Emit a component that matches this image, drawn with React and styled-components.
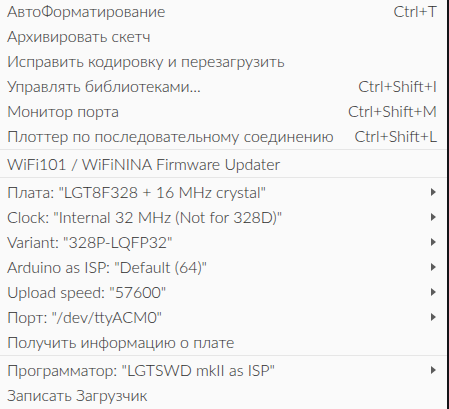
import styled, { createGlobalStyle } from "styled-components";

const GlobalStyle = createGlobalStyle`
  html, body {
    margin: 0;
    padding: 0;
    background: #141418;
  }
  body {
    font-family: Lato, "Noto Sans", sans-serif;
  }
`;

const Screen = styled.div`
  width: 449px;
  height: 409px;
  overflow: hidden;
  display: flex;
`;

const Menu = styled.div`
  width: 447px;
  height: 411px;
  margin-top: -2px;
  background: #fafafa;
  display: flex;
  flex-direction: column;
`;

const Item = styled.div`
  height: 25px;
  flex-shrink: 0;
  display: flex;
  align-items: center;
  justify-content: space-between;
  padding: 0 10px 0 7px;
  font-size: 15.9px;
  font-weight: 300;
  color: #2e2e2e;
  white-space: nowrap;
`;

const Label = styled.span`
  padding-bottom: 1px;
`;

const Shortcut = styled.span`
  padding-bottom: 1px;
`;

const SubArrow = styled.span`
  width: 0;
  height: 0;
  margin-right: 1px;
  border-top: 4px solid transparent;
  border-bottom: 4px solid transparent;
  border-left: 5px solid #5c5c5c;
`;

const Separator = styled.div`
  height: 1px;
  margin: 1px 0;
  flex-shrink: 0;
  background: #e6e6e6;
`;

const groups = [
  [
    { label: "АвтоФорматирование", shortcut: "Ctrl+T" },
    { label: "Архивировать скетч" },
    { label: "Исправить кодировку и перезагрузить" },
    { label: "Управлять библиотеками...", shortcut: "Ctrl+Shift+I" },
    { label: "Монитор порта", shortcut: "Ctrl+Shift+M" },
    { label: "Плоттер по последовательному соединению", shortcut: "Ctrl+Shift+L" },
  ],
  [{ label: "WiFi101 / WiFiNINA Firmware Updater" }],
  [
    { label: 'Плата: "LGT8F328 + 16 MHz crystal"', sub: true },
    { label: 'Clock: "Internal 32 MHz (Not for 328D)"', sub: true },
    { label: 'Variant: "328P-LQFP32"', sub: true },
    { label: 'Arduino as ISP: "Default (64)"', sub: true },
    { label: 'Upload speed: "57600"', sub: true },
    { label: 'Порт: "/dev/ttyACM0"', sub: true },
    { label: "Получить информацию о плате" },
  ],
  [
    { label: 'Программатор: "LGTSWD mkII as ISP"', sub: true },
    { label: "Записать Загрузчик" },
  ],
];

export default function App() {
  return (
    <>
      <GlobalStyle />
      <Screen>
        <Menu>
          {groups.map((items, gi) => (
            <div key={gi} style={{ display: "contents" }}>
              {gi > 0 && <Separator />}
              {items.map((it) => (
                <Item key={it.label}>
                  <Label>{it.label}</Label>
                  {it.shortcut && <Shortcut>{it.shortcut}</Shortcut>}
                  {it.sub && <SubArrow />}
                </Item>
              ))}
            </div>
          ))}
        </Menu>
      </Screen>
    </>
  );
}
